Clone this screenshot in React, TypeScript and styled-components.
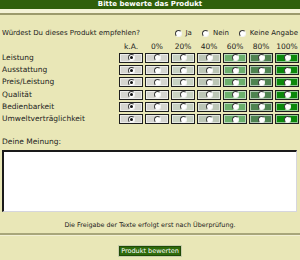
import React from 'react';
import styled, { createGlobalStyle } from 'styled-components';

const Global = createGlobalStyle`
  html, body { margin: 0; padding: 0; background: #e9e7b7; }
  body { font-family: "DejaVu Sans", Verdana, sans-serif; }
`;

const Page = styled.div`
  width: 300px;
  height: 260px;
  background: #e9e7b7;
  display: flex;
  flex-direction: column;
  overflow: hidden;
  color: #1c1c1c;
  font-size: 7.5px;
`;

const TitleBar = styled.div`
  height: 9px;
  background: #2f5f0b;
  color: #fff;
  font-weight: bold;
  font-size: 7px;
  line-height: 9px;
  text-align: center;
`;

const TopRule = styled.div`
  height: 4px;
  background: #f4f2d6;
  border-bottom: 2px solid #9c9a6c;
`;

const QuestionRow = styled.div`
  display: flex;
  align-items: center;
  justify-content: space-between;
  height: 10px;
  margin-top: 13px;
  padding: 0 2px;
  font-size: 7px;
`;

const Options = styled.div`
  display: flex;
  align-items: center;
  gap: 10px;
`;

const Option = styled.label`
  display: flex;
  align-items: center;
  gap: 4px;
`;

const Radio = styled.span<{ $checked?: boolean }>`
  position: relative;
  display: inline-block;
  width: 7px;
  height: 7px;
  box-sizing: border-box;
  border-radius: 50%;
  background: #fff;
  border: 1px solid;
  border-color: #3a3a3a #f4f4f4 #f4f4f4 #3a3a3a;
  &::after {
    content: '';
    display: ${(p) => (p.$checked ? 'block' : 'none')};
    position: absolute;
    left: 1px;
    top: 1px;
    width: 3px;
    height: 3px;
    border-radius: 50%;
    background: #111;
  }
`;

const RatingGrid = styled.div`
  display: grid;
  grid-template-columns: 115px repeat(7, 24px);
  grid-template-rows: 9px repeat(6, 10px);
  column-gap: 2px;
  row-gap: 2.3px;
  margin-top: 3.5px;
  padding-left: 2px;
  align-items: center;
`;

const ColHead = styled.div`
  text-align: center;
  line-height: 9px;
  white-space: nowrap;
`;

const RowLabel = styled.div`
  line-height: 10px;
  white-space: nowrap;
`;

const Cell = styled.div<{ $bg: string }>`
  height: 10px;
  box-sizing: border-box;
  background: ${(p) => p.$bg};
  border: 1px solid #1e1e1e;
  box-shadow: inset 0 0 0 1px rgba(255, 255, 255, 0.55);
  display: flex;
  align-items: center;
  justify-content: center;
`;

const SectionLabel = styled.div`
  margin-top: 12.7px;
  padding-left: 2px;
  line-height: 10px;
`;

const Comment = styled.textarea`
  display: block;
  margin: 3px 0 0 2px;
  width: 295px;
  height: 62px;
  box-sizing: border-box;
  resize: none;
  background: #fff;
  border-style: solid;
  border-width: 2px 1px 1px 2px;
  border-color: #1a1a1a #d6d6de #d6d6de #1a1a1a;
  padding: 0;
  outline: none;
`;

const Notice = styled.div`
  margin-top: 9px;
  text-align: center;
  font-size: 6.4px;
  line-height: 8px;
`;

const BottomRule = styled.div`
  margin-top: 4px;
  border-top: 2px solid #a8a67a;
  border-bottom: 1px solid #f2f0d4;
`;

const ButtonRow = styled.div`
  display: flex;
  justify-content: center;
  margin-top: 9px;
`;

const SubmitButton = styled.button`
  height: 12px;
  width: 64px;
  padding: 0;
  background: #2e6a0b;
  color: #fff;
  font-family: "DejaVu Sans", Verdana, sans-serif;
  font-size: 6.5px;
  line-height: 10px;
  border: 1px solid #c9ceac;
  box-shadow: inset 0 0 0 1px #1f4a06;
`;

const columns = ['k.A.', '0%', '20%', '40%', '60%', '80%', '100%'];
const colors = ['#d5d5d0', '#d5d5d0', '#c8d2c2', '#bcc6b6', '#6caf6c', '#4e8350', '#0b880b'];
const rows = ['Leistung', 'Ausstattung', 'Preis/Leistung', 'Qualität', 'Bedienbarkeit', 'Umweltverträglichkeit'];

export default function App() {
  return (
    <>
      <Global />
      <Page>
        <TitleBar>Bitte bewerte das Produkt</TitleBar>
        <TopRule />
        <QuestionRow>
          <span>Würdest Du dieses Produkt empfehlen?</span>
          <Options>
            <Option><Radio />Ja</Option>
            <Option><Radio />Nein</Option>
            <Option><Radio />Keine Angabe</Option>
          </Options>
        </QuestionRow>
        <RatingGrid>
          <div />
          {columns.map((c) => (
            <ColHead key={c}>{c}</ColHead>
          ))}
          {rows.map((r) => (
            <React.Fragment key={r}>
              <RowLabel>{r}</RowLabel>
              {colors.map((bg, i) => (
                <Cell key={i} $bg={bg}>
                  <Radio $checked={i === 0} />
                </Cell>
              ))}
            </React.Fragment>
          ))}
        </RatingGrid>
        <SectionLabel>Deine Meinung:</SectionLabel>
        <Comment />
        <Notice>Die Freigabe der Texte erfolgt erst nach Überprüfung.</Notice>
        <BottomRule />
        <ButtonRow>
          <SubmitButton>Produkt bewerten</SubmitButton>
        </ButtonRow>
      </Page>
    </>
  );
}
